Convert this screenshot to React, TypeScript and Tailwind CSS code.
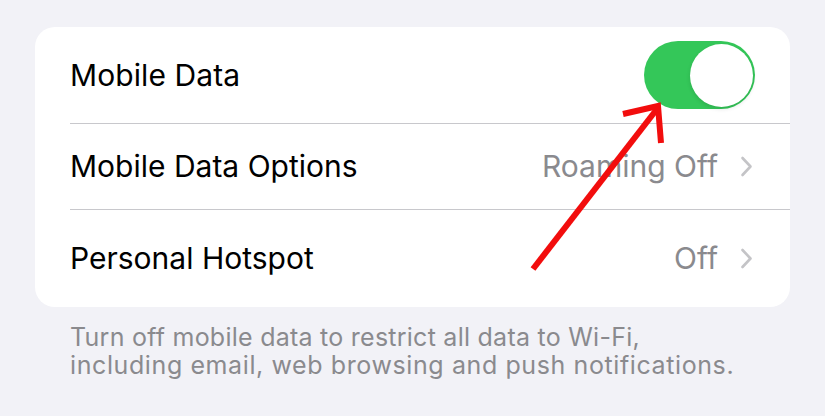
import React from "react";

function Chevron() {
  return (
    <svg width="13" height="21" viewBox="0 0 13 21" className="ml-[22px]">
      <path d="M2.5 2 L10.5 10.5 L2.5 19" fill="none" stroke="#c4c4c7" strokeWidth="2.6" strokeLinecap="round" strokeLinejoin="round" />
    </svg>
  );
}

export default function App() {
  return (
    <div
      className="relative w-[825px] h-[416px] bg-[#f2f2f7] pt-[27px] px-[35px] overflow-hidden"
      style={{ fontFamily: "Inter, 'Noto Sans', sans-serif" }}
    >
      <div className="w-[755px] bg-white rounded-[20px] overflow-hidden">
        <div className="flex items-center h-[96px] pl-[35px] pr-[35px] text-[30px] text-black">
          <span className="flex-1 tracking-[0.1px]">Mobile Data</span>
          <div className="w-[111px] h-[68px] rounded-full bg-[#34c759] flex items-center justify-end pr-[2px]">
            <div className="w-[63px] h-[63px] rounded-full bg-white shadow-[0_2px_4px_rgba(0,0,0,0.12)]" />
          </div>
        </div>
        <div className="ml-[35px] h-px bg-[#c8c8cc]" />
        <div className="flex items-center h-[85px] pl-[35px] pr-[37px] text-[30px]">
          <span className="flex-1 text-black">Mobile Data Options</span>
          <span className="text-[#8a8a8e]">Roaming Off</span>
          <Chevron />
        </div>
        <div className="ml-[35px] h-px bg-[#c8c8cc]" />
        <div className="flex items-center h-[97px] pl-[35px] pr-[37px] text-[30px]">
          <span className="flex-1 text-black">Personal Hotspot</span>
          <span className="text-[#8a8a8e]">Off</span>
          <Chevron />
        </div>
      </div>
      <div className="pl-[35px] pt-[16px] text-[25px] leading-[28px] tracking-[0.25px] text-[#8a8a8e]">
        <p>Turn off mobile data to restrict all data to Wi-Fi,</p>
        <p className="tracking-[0.6px]">including email, web browsing and push notifications.</p>
      </div>
      <svg className="absolute left-0 top-0 pointer-events-none" width="825" height="416" viewBox="0 0 825 416">
        <g stroke="#f20d0d" strokeWidth="6" fill="none" strokeLinecap="butt" strokeLinejoin="miter">
          <line x1="533" y1="269" x2="657" y2="109" />
          <polyline points="623,114 658,106 661,143" />
        </g>
      </svg>
    </div>
  );
}
